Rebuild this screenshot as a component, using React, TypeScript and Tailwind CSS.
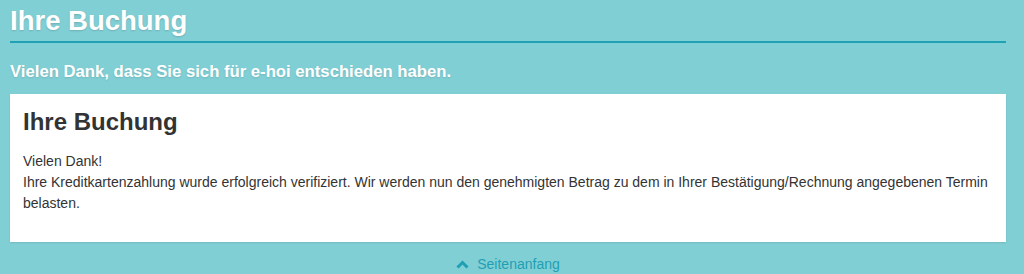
import React from "react";

export default function App() {
  return (
    <div className="min-h-[274px] bg-[#80cfd5] font-['Liberation_Sans',Arial,sans-serif] pl-[10px] pr-[18px]">
      <h1 className="text-[27.5px] leading-[41px] font-bold text-white border-b-2 border-[#20a2b5] [text-shadow:0_1px_2px_rgba(0,0,0,0.15)]">
        Ihre Buchung
      </h1>
      <p className="mt-[19px] text-[16.7px] leading-[20px] font-bold text-white [text-shadow:0_1px_2px_rgba(0,0,0,0.12)]">
        Vielen Dank, dass Sie sich für e-hoi entschieden haben.
      </p>
      <div className="mt-[12px] bg-white px-[13px] pt-[13px] pb-[28px] shadow-[0_1px_2px_rgba(0,0,0,0.1)]">
        <h2 className="text-[24px] leading-[30px] font-bold text-[#333333]">Ihre Buchung</h2>
        <div className="mt-[14px] text-[14px] leading-[21px] text-[#333333]">
          <p>Vielen Dank!</p>
          <p>
            Ihre Kreditkartenzahlung wurde erfolgreich verifiziert. Wir werden nun den genehmigten Betrag zu dem in Ihrer
            Bestätigung/Rechnung angegebenen Termin belasten.
          </p>
        </div>
      </div>
      <div className="flex justify-center pt-[12px]">
        <a className="flex items-center gap-[8px] text-[14px] leading-[20px] text-[#1f9fb4]">
          <svg width="13" height="9" viewBox="0 0 13 9" fill="none">
            <path d="M1.5 7.5 L6.5 2.5 L11.5 7.5" stroke="#1f9fb4" strokeWidth="3" />
          </svg>
          Seitenanfang
        </a>
      </div>
    </div>
  );
}
